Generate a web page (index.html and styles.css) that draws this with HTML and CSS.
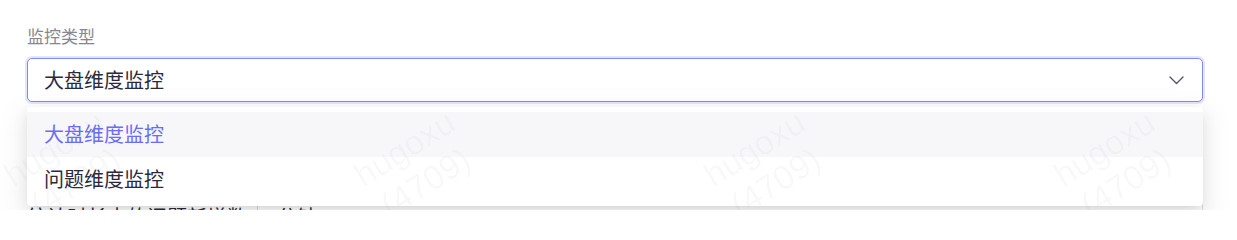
FILE: index.html
```html
<!DOCTYPE html>
<html lang="zh-CN">
<head>
<meta charset="utf-8">
<title>监控类型</title>
<link rel="stylesheet" href="styles.css">
</head>
<body>
<div class="form">
  <div class="label">监控类型</div>
  <div class="field">
    <div class="select is-open">
      <span class="select-value">大盘维度监控</span>
      <svg class="chev" width="15" height="9" viewBox="0 0 15 9"><polyline points="1,1 7.5,7.5 14,1" fill="none" stroke="#55566b" stroke-width="1.4" stroke-linejoin="round" stroke-linecap="round"/></svg>
    </div>
    <ul class="dropdown">
      <li class="option is-active">大盘维度监控</li>
      <li class="option">问题维度监控</li>
    </ul>
  </div>
  <div class="row2">
    <span class="row2-label">统计时长内的问题新增数</span>
    <div class="select select-plain">
      <span class="select-value">分钟</span>
      <svg class="chev" width="15" height="9" viewBox="0 0 15 9"><polyline points="1,1 7.5,7.5 14,1" fill="none" stroke="#55566b" stroke-width="1.4" stroke-linejoin="round" stroke-linecap="round"/></svg>
    </div>
  </div>
</div>
<div class="watermark">
  <div class="wm-cell"><div class="wm-text">hugoxu<br>(4709)</div></div>
  <div class="wm-cell"><div class="wm-text">hugoxu<br>(4709)</div></div>
  <div class="wm-cell"><div class="wm-text">hugoxu<br>(4709)</div></div>
  <div class="wm-cell"><div class="wm-text">hugoxu<br>(4709)</div></div>
</div>
</body>
</html>
```

FILE: styles.css
```css
html {
  height: 210px;
  overflow: hidden;
  background: #ffffff;
}
body {
  margin: 0;
  height: 210px;
  padding: 24px 34px 0 27px;
  box-sizing: border-box;
  font-family: "Noto Sans CJK SC", "Noto Sans", sans-serif;
  overflow: hidden;
  position: relative;
}
.form {
  display: flex;
  flex-direction: column;
  height: 186px;
  overflow: hidden;
  margin: -20px -34px 0 -27px;
  padding: 20px 34px 0 27px;
}
.label {
  font-size: 17px;
  line-height: 24px;
  color: #878794;
  margin-bottom: 10px;
}
.field {
  position: relative;
}
.select {
  display: flex;
  align-items: center;
  justify-content: space-between;
  height: 44px;
  flex: none;
  box-sizing: border-box;
  border: 1px solid #d9d9e2;
  border-radius: 5px;
  padding: 0 18px 0 16px;
  background: #ffffff;
}
.select.is-open {
  border-color: #8487f6;
  box-shadow: 0 0 0 2px #e5e6fd;
}
.select-value {
  font-size: 20px;
  line-height: 42px;
  color: #2b2b3e;
}
.chev {
  display: block;
  margin-top: 1px;
}
.dropdown {
  position: absolute;
  z-index: 5;
  left: 0;
  right: 0;
  top: calc(100% + 5px);
  margin: 0;
  padding: 5px 0 4px;
  list-style: none;
  background: #ffffff;
  border-radius: 4px;
  box-shadow: 0 6px 16px 0 rgba(0, 0, 0, 0.08), 0 3px 6px -4px rgba(0, 0, 0, 0.12), 0 9px 28px 8px rgba(0, 0, 0, 0.05);
}
.option {
  height: 45px;
  line-height: 44px;
  padding-left: 17px;
  font-size: 20px;
  color: #2b2b3e;
}
.option.is-active {
  background: #f7f7fa;
  color: #6a6df6;
}
.row2 {
  display: flex;
  align-items: center;
  margin-top: 93px;
  flex: none;
}
.row2-label {
  font-size: 20px;
  line-height: 44px;
  color: #2b2b3e;
  width: 230px;
  flex: none;
}
.select-plain {
  flex: 1;
  padding-left: 19px;
  padding-right: 22px;
}
.watermark {
  position: absolute;
  top: 0;
  left: 0;
  width: 1237px;
  height: 210px;
  overflow: hidden;
  pointer-events: none;
  z-index: 20;
}
.wm-row {
  display: flex;
}
.watermark {
  display: flex;
  padding-left: 0;
}
.wm-cell {
  width: 350px;
  height: 210px;
  box-sizing: border-box;
  padding-top: 120px;
  flex: none;
  display: flex;
  align-items: center;
  justify-content: center;
}
.wm-cell:first-child {
  margin-left: -110px;
}
.wm-text {
  font-family: "Liberation Sans", Arial, sans-serif;
  font-size: 34px;
  line-height: 40px;
  text-align: center;
  white-space: nowrap;
  color: rgba(60, 60, 110, 0.04);
  transform: rotate(-32deg);
}
```
